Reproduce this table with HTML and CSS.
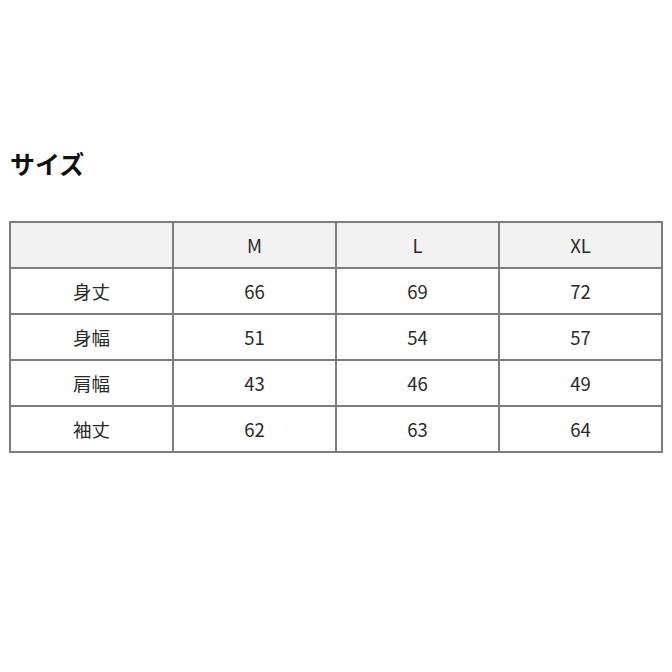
FILE: index.html
```html
<!DOCTYPE html>
<html lang="ja">
<head>
<meta charset="utf-8">
<link rel="stylesheet" href="styles.css">
</head>
<body>
<div class="page">
  <h2 class="title">サイズ</h2>
  <table class="size-table">
    <tr class="head"><td></td><td>M</td><td>L</td><td>XL</td></tr>
    <tr><td>身丈</td><td>66</td><td>69</td><td>72</td></tr>
    <tr><td>身幅</td><td>51</td><td>54</td><td>57</td></tr>
    <tr><td>肩幅</td><td>43</td><td>46</td><td>49</td></tr>
    <tr><td>袖丈</td><td>62</td><td>63</td><td>64</td></tr>
  </table>
</div>
</body>
</html>
```
FILE: styles.css
```css
html, body {
  margin: 0;
  padding: 0;
  background: #fff;
}
.page {
  padding: 144px 9px 0 9px;
  font-family: "Noto Sans CJK JP", "Noto Sans", sans-serif;
  color: #222;
}
.title {
  margin: 0 0 0 1px;
  font-size: 25px;
  line-height: 38px;
  font-weight: 700;
  color: #111;
  height: 77px;
}
.size-table {
  width: 654px;
  border-collapse: collapse;
  table-layout: fixed;
  border: 2px solid #7d7d7d;
}
.size-table td {
  border: 2px solid #7d7d7d;
  height: 44px;
  padding: 0;
  text-align: center;
  font-size: 18.5px;
  color: #2a2a2a;
}
.size-table .head td {
  background: #f2f2f2;
}
```
